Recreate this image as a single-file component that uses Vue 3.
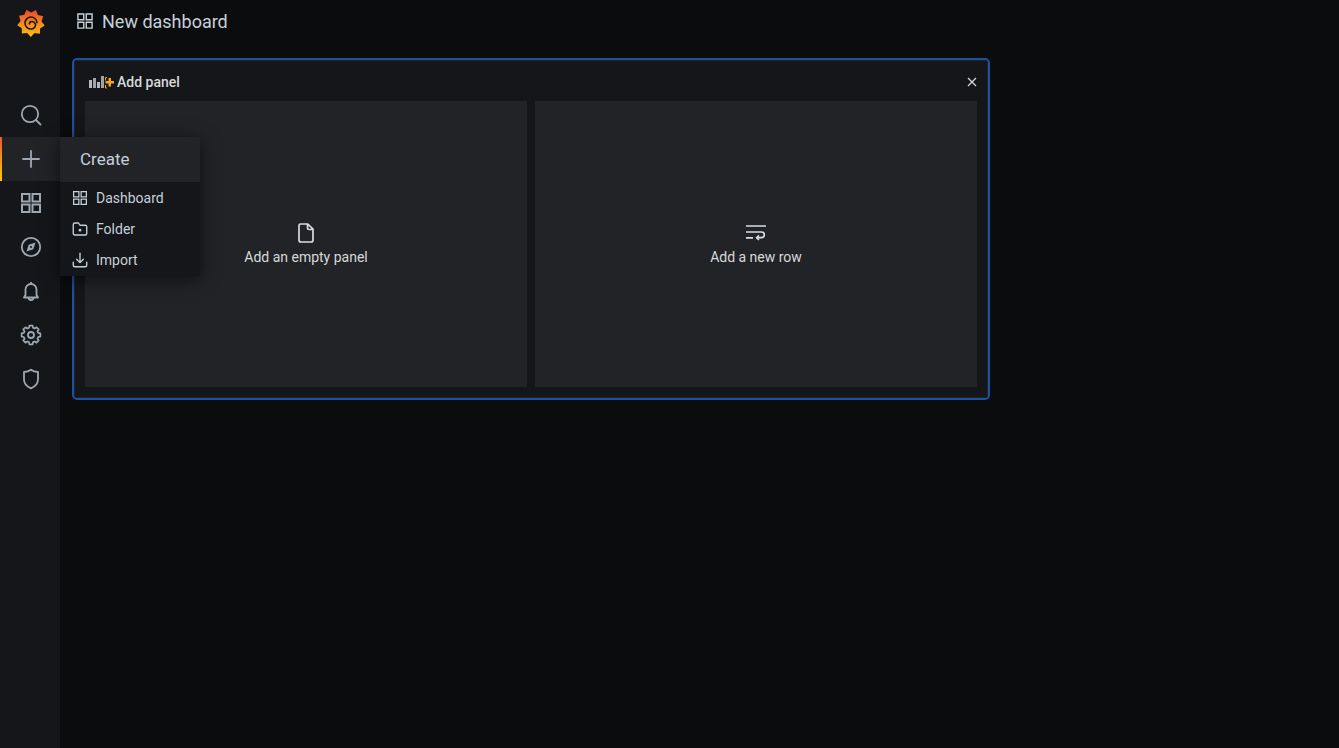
<template>
  <div class="page">
    <aside class="sidemenu">
      <a class="logo">
        <svg viewBox="0 0 28 28" width="28" height="28">
          <defs>
            <linearGradient id="logoGrad" x1="0" y1="1" x2="0" y2="0">
              <stop offset="0" stop-color="#fcc010" />
              <stop offset="0.5" stop-color="#f58a1f" />
              <stop offset="1" stop-color="#e9452a" />
            </linearGradient>
          </defs>
          <path :d="gearPath" fill="url(#logoGrad)" />
          <path d="M20 13.600a6 6 0 1 0-5.500 6.400c2.700-.2 4.200-2.300 4-4.300-.2-2-2-3.400-3.800-3.200-1.500.2-2.400 1.300-2.300 2.500" fill="none" stroke="#1d1510" stroke-width="1.600" stroke-linecap="round" />
        </svg>
      </a>
      <div class="menu-items">
        <div v-for="item in sideItems" :key="item.id" class="side-item" :class="{ active: item.id === 'create' }">
          <svg viewBox="0 0 24 24" width="24" height="24" class="side-icon" v-html="item.icon"></svg>
          <div v-if="item.id === 'create'" class="dropdown">
            <div class="dropdown-head">Create</div>
            <div class="dropdown-list">
              <div v-for="entry in createItems" :key="entry.label" class="dropdown-row">
                <svg viewBox="0 0 24 24" width="18" height="18" class="row-icon" v-html="entry.icon"></svg>
                <span>{{ entry.label }}</span>
              </div>
            </div>
          </div>
        </div>
      </div>
    </aside>

    <main class="content">
      <header class="navbar">
        <svg viewBox="0 0 24 24" width="20" height="20" class="nav-icon" v-html="appsIcon"></svg>
        <span class="nav-title">New dashboard</span>
      </header>

      <section class="panel">
        <div class="panel-inner">
          <div class="panel-head">
            <svg viewBox="0 0 26 16" width="26" height="16" class="head-icon">
              <rect x="1" y="6" width="3" height="8" fill="#b5b9be" />
              <rect x="5" y="4" width="3" height="10" fill="#9fa3a9" />
              <rect x="9" y="8" width="3" height="6" fill="#b5b9be" />
              <rect x="13" y="2" width="3" height="12" fill="#9fa3a9" />
              <path d="M19 3.500h-1.500v3M19 14h-1.500v-3" fill="none" stroke="#f5a623" stroke-width="1" />
              <path d="M20.500 4v3h-3v2.500h3v3H23v-3h3V7h-3V4z" fill="#f7a51d" />
            </svg>
            <span class="head-title">Add panel</span>
            <svg viewBox="0 0 10 10" width="10" height="10" class="close">
              <path d="M1 1l8 8M9 1l-8 8" fill="none" stroke="#d8d9da" stroke-width="1.200" />
            </svg>
          </div>
          <div class="options">
            <div class="option">
              <svg viewBox="0 0 24 24" width="24" height="24" class="option-icon">
                <path d="M6.500 3h7.300L19 8.200V19a2 2 0 0 1-2 2H7a2 2 0 0 1-2-2V4.500A1.500 1.500 0 0 1 6.500 3zM13.500 3.200V7a1.500 1.500 0 0 0 1.500 1.500h3.800" fill="none" stroke="#d8dce2" stroke-width="1.700" stroke-linejoin="round" />
              </svg>
              <span>Add an empty panel</span>
            </div>
            <div class="option">
              <svg viewBox="0 0 24 24" width="24" height="24" class="option-icon">
                <path d="M2 5h20M2 11h15.500a2.700 2.700 0 0 1 0 5.600h-4.700M2 16.800h7" fill="none" stroke="#d8dce2" stroke-width="1.700" />
                <path d="M15 14.400l-2.400 2.300 2.400 2.300" fill="none" stroke="#d8dce2" stroke-width="1.700" />
              </svg>
              <span>Add a new row</span>
            </div>
          </div>
        </div>
      </section>
    </main>
  </div>
</template>

<script setup>
const appsIcon = '<path d="M3.500 3.500h7v7h-7zM13.500 3.500h7v7h-7zM3.500 13.500h7v7h-7zM13.500 13.500h7v7h-7z" fill="none" stroke="currentColor" stroke-width="1.700"/>'

const sideItems = [
  { id: 'search', icon: '<circle cx="11" cy="11" r="8.200" fill="none" stroke="currentColor" stroke-width="1.800"/><path d="M17 17l4.500 4.500" stroke="currentColor" stroke-width="1.800" stroke-linecap="round"/>' },
  { id: 'create', icon: '<path d="M12 4v16M4 12h16" stroke="currentColor" stroke-width="1.800" stroke-linecap="round"/>' },
  { id: 'dash', icon: '<path d="M3 3h7.500v7.500H3zM13.500 3H21v7.500h-7.500zM3 13.500h7.500V21H3zM13.500 13.500H21V21h-7.500z" fill="none" stroke="currentColor" stroke-width="2"/>' },
  { id: 'explore', icon: '<circle cx="12" cy="12" r="9.200" fill="none" stroke="currentColor" stroke-width="1.800"/><path d="M16.500 7.500l-2.200 6.800-6.800 2.200 2.200-6.800z" fill="currentColor"/><circle cx="12" cy="12" r="1" fill="#141619"/>' },
  { id: 'alert', icon: '<path d="M6.500 16v-5.500a5.500 5.500 0 0 1 11 0V16l1.500 2.500H5zM12 3v2M9.500 18.500a2.500 2.500 0 0 0 5 0" fill="none" stroke="currentColor" stroke-width="1.800" stroke-linejoin="round"/>' },
  { id: 'config', icon: '<circle cx="12" cy="12" r="3" fill="none" stroke="currentColor" stroke-width="1.800"/><path d="M10.200 3h3.600l.5 2.500 1.900.8 2.100-1.400 2.500 2.500-1.400 2.100.8 1.900 2.500.5v3.600l-2.500.5-.8 1.900 1.400 2.100-2.500 2.500-2.100-1.400-1.900.8-.5 2.500h-3.600l-.5-2.500-1.900-.8-2.100 1.400-2.500-2.500 1.400-2.100-.8-1.900-2.500-.5v-3.600l2.500-.5.8-1.900-1.400-2.100 2.500-2.500 2.100 1.400 1.900-.8z" transform="translate(1.500 0) scale(.875)" fill="none" stroke="currentColor" stroke-width="2" stroke-linejoin="round"/>' },
  { id: 'shield', icon: '<path d="M12 2.800c1.800 1.400 4.200 2.200 7 2.200v7.500c0 4.200-2.800 7-7 8.800-4.200-1.800-7-4.600-7-8.800V5c2.800 0 5.200-.8 7-2.200z" fill="none" stroke="currentColor" stroke-width="1.800" stroke-linejoin="round"/>' }
]

const createItems = [
  { label: 'Dashboard', icon: appsIcon },
  { label: 'Folder', icon: '<path d="M5 4h5l2 3h7a2 2 0 0 1 2 2v9a2 2 0 0 1-2 2H5a2 2 0 0 1-2-2V6a2 2 0 0 1 2-2z" fill="none" stroke="currentColor" stroke-width="1.800" stroke-linejoin="round"/><circle cx="12" cy="13.500" r="1.800" fill="currentColor"/>' },
  { label: 'Import', icon: '<path d="M12 3v12M7.500 11l4.500 4.500 4.500-4.500M3 15v4a2 2 0 0 0 2 2h14a2 2 0 0 0 2-2v-4" fill="none" stroke="currentColor" stroke-width="1.800" stroke-linecap="round" stroke-linejoin="round"/>' }
]

// star-ish outline of the logo, alternating long and short radii
const teeth = 9
const points = []
for (let i = 0; i < teeth * 2; i++) {
  const angle = (i / (teeth * 2)) * Math.PI * 2 - Math.PI / 2.6
  const r = i % 2 === 0 ? 14 : 10.6
  points.push(`${(14 + Math.cos(angle) * r).toFixed(2)} ${(14 + Math.sin(angle) * r).toFixed(2)}`)
}
const gearPath = 'M' + points.join('L') + 'z'
</script>

<style>
html,
body {
  background: #0b0c0e;
}
</style>

<style scoped>
.page {
  display: flex;
  min-height: 748px;
  background: #0b0c0e;
  font-family: Roboto, "Liberation Sans", sans-serif;
  color: #d8d9da;
}

.sidemenu {
  width: 60px;
  flex-shrink: 0;
  background: #141619;
  display: flex;
  flex-direction: column;
  align-items: stretch;
}

.logo {
  height: 93px;
  display: flex;
  justify-content: center;
  padding: 9px 0 0 2px;
  box-sizing: border-box;
}

.logo svg {
  display: block;
}

.side-item {
  position: relative;
  height: 44px;
  padding-left: 2px;
  box-sizing: border-box;
  display: flex;
  align-items: center;
  justify-content: center;
}

.side-item.active {
  background: #212327;
}

.side-item.active::before {
  content: "";
  position: absolute;
  left: 0;
  top: 0;
  bottom: 0;
  width: 2px;
  background: linear-gradient(180deg, #f05a28 0%, #fbca0a 100%);
}

.side-icon {
  color: #9fa7b3;
}

.dropdown {
  position: absolute;
  left: 60px;
  top: 0;
  width: 140px;
  background: #141619;
  box-shadow: 0 3px 16px rgba(0, 0, 0, 0.6);
  z-index: 5;
}

.dropdown-head {
  height: 45px;
  line-height: 45px;
  padding-left: 20px;
  background: #212327;
  font-size: 17px;
  color: #c7d0d9;
}

.dropdown-list {
  padding: 0 0 1px;
}

.dropdown-row {
  height: 31px;
  display: flex;
  align-items: center;
  gap: 7px;
  padding-left: 11px;
  font-size: 14px;
  color: #c7d0d9;
}

.row-icon {
  color: #c7d0d9;
}

.content {
  flex: 1;
  min-width: 0;
}

.navbar {
  height: 42px;
  display: flex;
  align-items: center;
  gap: 7px;
  padding-left: 15px;
  margin-bottom: 16px;
}

.nav-icon {
  color: #c7d0d9;
}

.nav-title {
  font-size: 18px;
  color: #c7d0d9;
}

.panel {
  width: 918px;
  height: 342px;
  margin-left: 12px;
  box-sizing: border-box;
  border: 2px solid #1c50a3;
  border-radius: 5px;
  background: #141619;
}

.panel-inner {
  height: 100%;
  box-sizing: border-box;
  border: 1px solid #202226;
  border-radius: 3px;
  padding: 0 10px 10px;
  display: flex;
  flex-direction: column;
}

.panel-head {
  height: 40px;
  flex-shrink: 0;
  display: flex;
  align-items: center;
  padding: 2px 0 0 3px;
  box-sizing: border-box;
  gap: 3px;
}

.head-title {
  font-size: 14px;
  font-weight: 500;
  color: #d8d9da;
}

.close {
  margin-left: auto;
}

.options {
  flex: 1;
  display: grid;
  grid-template-columns: 1fr 1fr;
  gap: 8px;
}

.option {
  background: #212327;
  display: flex;
  flex-direction: column;
  align-items: center;
  justify-content: center;
  gap: 4px;
  padding-bottom: 2px;
  font-size: 14px;
  color: #d8d9da;
}

.option-icon {
  display: block;
}
</style>
